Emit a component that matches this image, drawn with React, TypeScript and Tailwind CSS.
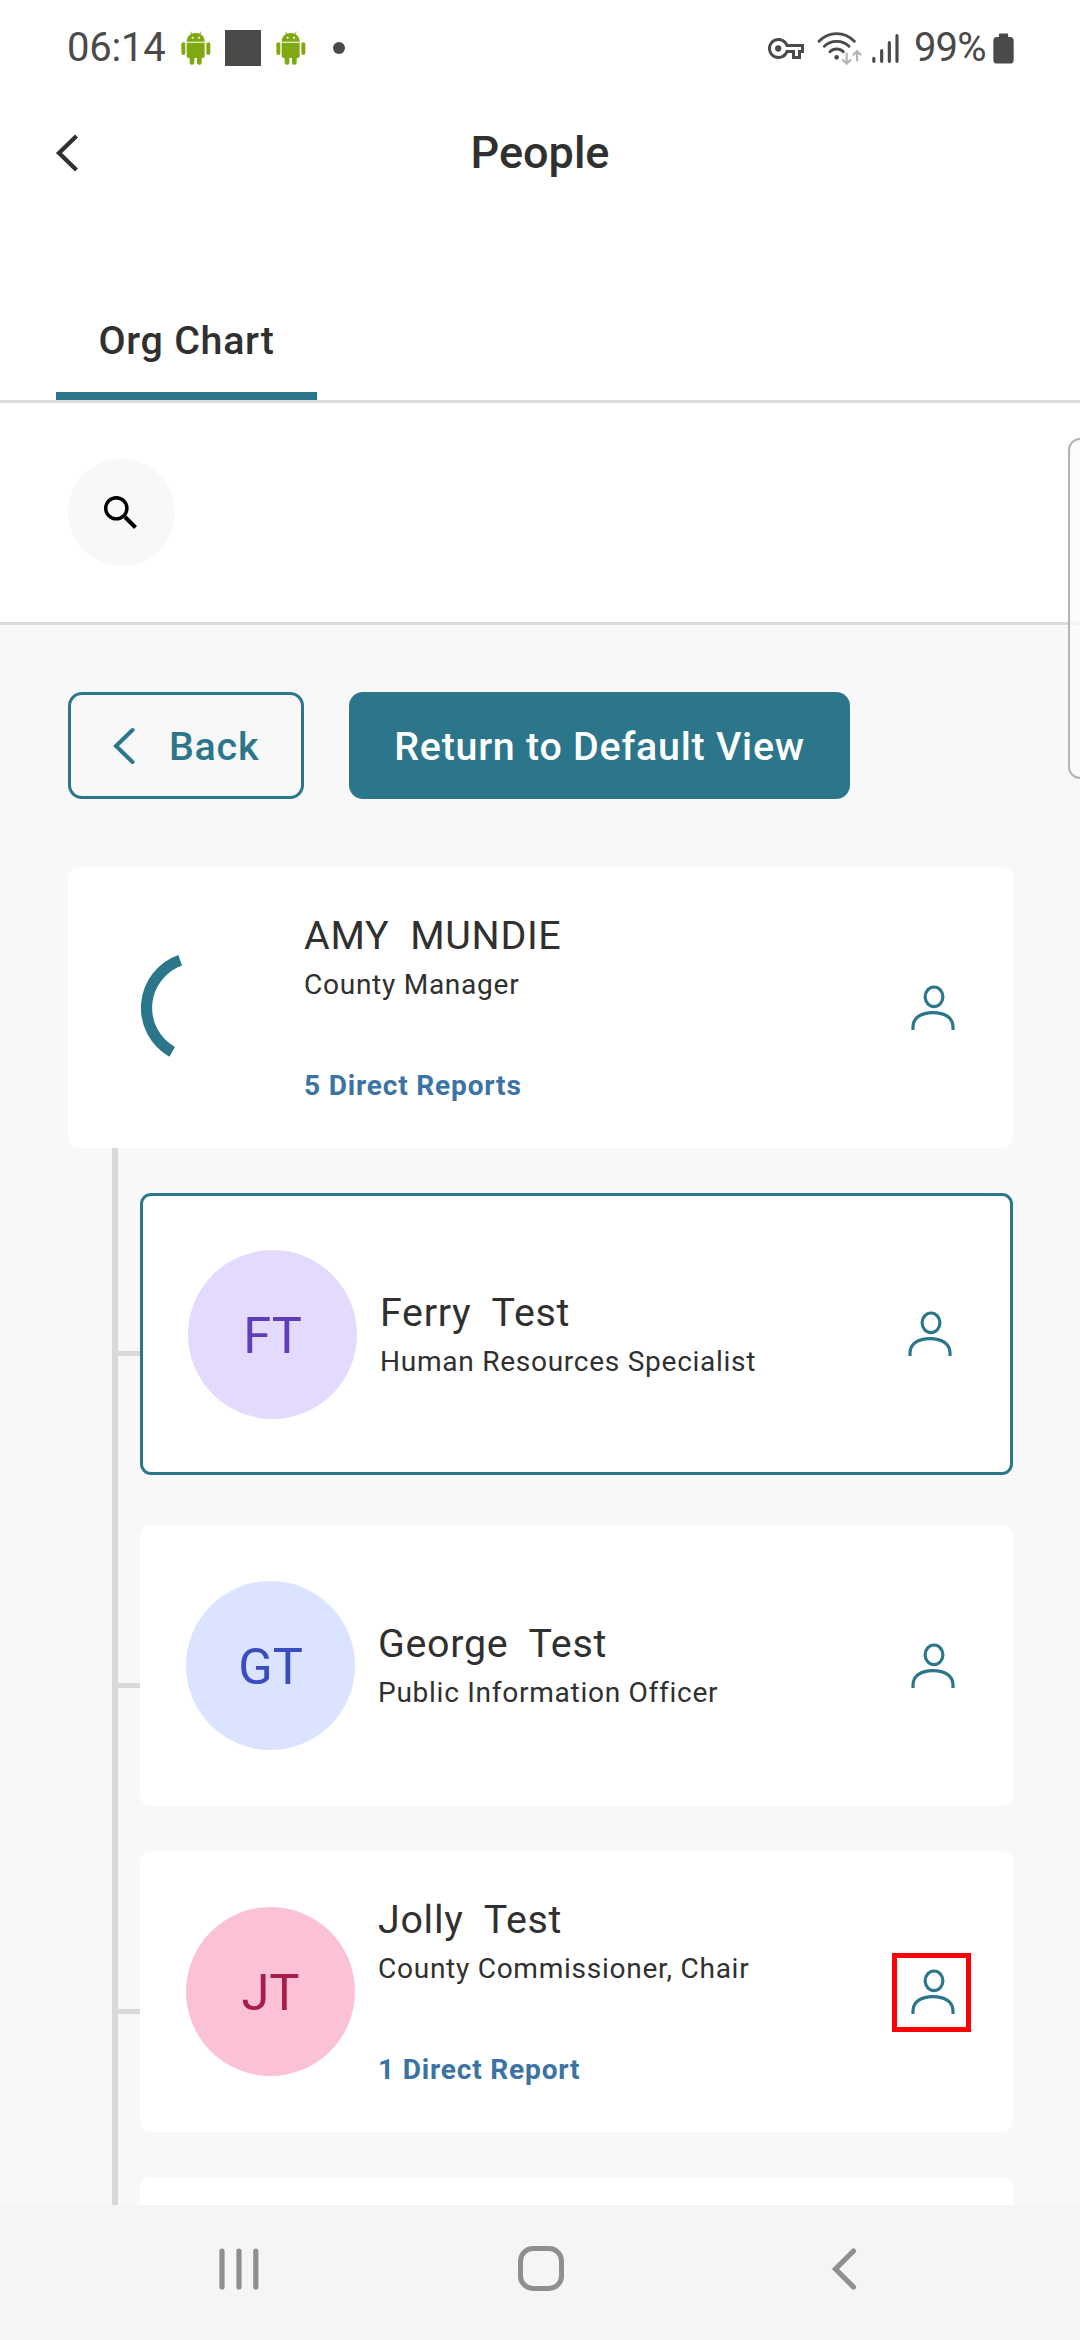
type Person = {
  name: string;
  title: string;
  reports?: string;
  initials?: string;
  avatar?: string;
  selected?: boolean;
  marked?: boolean;
};

const manager: Person = {
  name: 'AMY  MUNDIE',
  title: 'County Manager',
  reports: '5 Direct Reports',
};

const reports: Person[] = [
  {
    name: 'Ferry  Test',
    title: 'Human Resources Specialist',
    initials: 'FT',
    avatar: 'bg-[#e4dafd] text-[#5f3dbb]',
    selected: true,
  },
  {
    name: 'George  Test',
    title: 'Public Information Officer',
    initials: 'GT',
    avatar: 'bg-[#dae3ff] text-[#3a4cc0]',
  },
  {
    name: 'Jolly  Test',
    title: 'County Commissioner, Chair',
    reports: '1 Direct Report',
    initials: 'JT',
    avatar: 'bg-[#fbc2d7] text-[#a61e4d]',
    marked: true,
  },
];

function AndroidBot() {
  return (
    <svg viewBox="425 64 90 102" className="h-[34px] w-[30px]" fill="#80a911">
      <path d="M442 96c0-16 12-26 27-26s27 10 27 26z" />
      <path d="M453 66l7 11M486 66l-7 11" stroke="#80a911" strokeWidth="2.5" />
      <circle cx="460" cy="84" r="3" fill="white" />
      <circle cx="479" cy="84" r="3" fill="white" />
      <path d="M442 99h54v40q0 6-6 6h-42q-6 0-6-6z" />
      <rect x="426" y="98" width="12" height="38" rx="6" />
      <rect x="501" y="98" width="12" height="38" rx="6" />
      <rect x="451" y="132" width="14" height="33" rx="6" />
      <rect x="473" y="132" width="14" height="33" rx="6" />
    </svg>
  );
}

function VpnKey() {
  return (
    <svg viewBox="0 5 24 14" className="h-[21px] w-[36px]" fill="#4a4a4a">
      <path
        fillRule="evenodd"
        d="M22 19h-6v-4h-2.68A7 7 0 0 1 7 19c-3.86 0-7-3.14-7-7s3.14-7 7-7c2.72 0 5.17 1.58 6.32 4H24v6h-2v4zm-4-2h2v-4h2v-2H11.94l-.23-.67C11.01 8.34 9.11 7 7 7c-2.76 0-5 2.24-5 5s2.24 5 5 5c2.11 0 4.01-1.34 4.71-3.33l.23-.67H18v4z"
      />
      <circle cx="6.8" cy="12" r="2.1" />
    </svg>
  );
}

function Wifi() {
  return (
    <svg viewBox="228 60 138 105" className="h-[35px] w-[46px]" fill="none" strokeLinecap="round">
      <g stroke="#4a4a4a" strokeWidth="8.5">
        <path d="M234 91Q257 68 287 68T340 91" />
        <path d="M250 106Q265 91 287 91T324 106" />
        <path d="M267 122Q275 114 287 114T307 122" />
      </g>
      <circle cx="287" cy="139" r="7" fill="#4a4a4a" />
      <g stroke="#b4b4b4" strokeWidth="6.5">
        <path d="M317 128v28M306 147l11 11 11-11" />
        <path d="M348 148v-26M337 131l11-11 11 11" />
      </g>
    </svg>
  );
}

function Signal() {
  return (
    <svg
      viewBox="390 66 84 93"
      className="h-[31px] w-[28px]"
      stroke="#4a4a4a"
      strokeWidth="9.5"
      strokeLinecap="round"
    >
      <path d="M398.500 142v9M422 119v32M445 95v56M468 74v77" />
    </svg>
  );
}

function Battery() {
  return (
    <svg viewBox="756 68 64 94" className="h-[31px] w-[21px]" fill="#4a4a4a">
      <rect x="774" y="69" width="28" height="20" rx="3" />
      <rect x="757" y="80" width="62" height="81" rx="11" />
    </svg>
  );
}

function StatusBar() {
  return (
    <div className="flex h-24 items-center pl-[67px] pr-[66px] text-[40px] leading-[46px] text-[#4a4a4a]">
      <span className="w-[114px] tracking-[-0.2px]">06:14</span>
      <AndroidBot />
      <span className="ml-[14px] h-9 w-9 bg-[#4a4a4a]" />
      <span className="ml-[15px] flex">
        <AndroidBot />
      </span>
      <span className="ml-[27px] h-3 w-3 rounded-full bg-[#4a4a4a]" />
      <span className="ml-auto flex items-center">
        <VpnKey />
        <span className="ml-[13px] flex">
          <Wifi />
        </span>
        <span className="ml-[8px] flex">
          <Signal />
        </span>
        <span className="ml-[15px] w-[79px] tracking-[-0.9px]">99%</span>
        <Battery />
      </span>
    </div>
  );
}

function PersonIcon() {
  return (
    <svg
      viewBox="0 0 46 48"
      className="h-12 w-[46px]"
      fill="none"
      stroke="#2c768c"
      strokeWidth="3.2"
    >
      <ellipse cx="24" cy="12.800" rx="8.900" ry="9.800" />
      <path d="M3 46v-3C3 34 11 28.600 23 28.600S43 34 43 43v3" />
    </svg>
  );
}

function Spinner() {
  return (
    <svg viewBox="0 0 112 112" className="h-28 w-28" fill="none" stroke="#2c768c" strokeWidth="11.2">
      <path d="M39.200 8.300A50.500 50.500 0 0 0 31.200 99.900" />
    </svg>
  );
}

function Details({ person }: { person: Person }) {
  return (
    <div className="flex flex-col whitespace-pre tracking-[0.7px] text-[#303030]">
      <span className="text-[39.4px] leading-[46px]">{person.name}</span>
      <span className="mt-[9px] text-[28.1px] leading-[33px]">{person.title}</span>
      {person.reports && (
        <span className="mt-[68px] text-[28.1px] font-bold leading-[33px] tracking-[0.8px] text-[#3b73a5]">
          {person.reports}
        </span>
      )}
    </div>
  );
}

function ReportRow({ person }: { person: Person }) {
  return (
    <div className={person.selected ? 'flex h-[282px]' : 'flex h-[281px]'}>
      <div className="mt-[158px] h-[5px] w-[22px] bg-[#d9d9d9]" />
      <div
        className={
          person.selected
            ? 'flex flex-1 items-center rounded-[11px] border-3 border-[#2c768c] bg-white pl-[45px] pr-[57px]'
            : 'flex flex-1 items-center rounded-[11px] bg-white pl-[46px] pr-[57px]'
        }
      >
        <div
          className={`flex h-[169px] w-[169px] items-center justify-center rounded-full pt-[3px] text-[50.6px] ${person.avatar}`}
        >
          {person.initials}
        </div>
        <div className={person.selected || person.reports ? 'ml-[23px] flex-1' : 'ml-[23px] flex-1 pb-[2px]'}>
          <Details person={person} />
        </div>
        <div className="relative">
          <PersonIcon />
          {person.marked && (
            <div className="absolute -left-[18px] -top-[15px] h-[79px] w-[79px] border-5 border-[#fb0207]" />
          )}
        </div>
      </div>
    </div>
  );
}

export default function App() {
  return (
    <div className="relative flex h-[2340px] w-[1080px] flex-col overflow-hidden bg-white font-['Roboto',sans-serif]">
      <StatusBar />
      <header className="grid h-28 grid-cols-[1fr_auto_1fr] items-center pt-[1px]">
        <svg
          viewBox="0 0 24 38"
          className="ml-[55px] h-[38px] w-6"
          fill="none"
          stroke="#303030"
          strokeWidth="4.3"
        >
          <path d="M21.500 2L4 19l17.500 17" />
        </svg>
        <h1 className="text-[45px] font-medium leading-[52px] text-[#303030]">People</h1>
      </header>
      <nav className="flex h-[195px] items-end border-b-3 border-[#dadbdb] pl-14">
        <div className="flex h-[98px] w-[261px] justify-center border-b-8 border-[#2c768c] pt-[16px] text-[39.4px] font-medium leading-[46px] tracking-[0.7px] text-[#303030]">
          Org Chart
        </div>
      </nav>
      <div className="flex h-[222px] items-center border-b-3 border-[#dadbdb] pl-[68px]">
        <div className="flex h-[107px] w-[107px] items-center justify-center rounded-full bg-[#f8f8f8] pr-px">
          <svg viewBox="0 0 34 34" className="h-[34px] w-[34px]" fill="none" stroke="black">
            <circle cx="12.300" cy="12.300" r="10.600" strokeWidth="3.400" />
            <path d="M21 21L31.500 31.500" strokeWidth="4" />
          </svg>
        </div>
      </div>

      <main className="flex min-h-0 flex-1 flex-col overflow-hidden bg-[#f8f8f8] pl-[68px] pr-[67px] pt-[67px]">
        <div className="flex h-[107px] shrink-0 gap-[45px] text-[39.4px] font-medium leading-[46px] tracking-[0.75px]">
          <div className="flex w-[236px] items-center rounded-[14px] border-3 border-[#2c768c] pl-[41px] text-[#2c768c]">
            <svg
              viewBox="0 0 24 38"
              className="h-[38px] w-6"
              fill="none"
              stroke="#2c768c"
              strokeWidth="4"
              strokeLinecap="round"
            >
              <path d="M20.500 3L4 19l16.500 16" />
            </svg>
            <span className="ml-[33px] pt-[2px]">Back</span>
          </div>
          <div className="flex w-[501px] items-center justify-center rounded-[14px] bg-[#2c768c] pt-[2px] text-white">
            Return to Default View
          </div>
        </div>

        <div className="mt-[68px] flex h-[281px] shrink-0 items-center rounded-[11px] bg-white pl-[73px] pr-[57px]">
          <Spinner />
          <div className="ml-[51px] flex-1">
            <Details person={manager} />
          </div>
          <PersonIcon />
        </div>

        <div className="ml-[44px] flex shrink-0">
          <div className="w-[6px] bg-[#d9d9d9]" />
          <div className="flex flex-1 flex-col pt-[45px]">
            <ReportRow person={reports[0]} />
            <div className="mt-[50px] flex flex-col gap-[45px]">
              <ReportRow person={reports[1]} />
              <ReportRow person={reports[2]} />
              <div className="ml-[22px] h-[281px] rounded-[11px] bg-white" />
            </div>
          </div>
        </div>
      </main>

      <footer className="flex h-[135px] shrink-0 items-center bg-[#f5f5f5] pb-[8px] pl-[219px] pr-[223px]">
        <svg
          viewBox="0 0 40 42"
          className="h-[42px] w-10"
          stroke="#8f8f8f"
          strokeWidth="5.200"
          strokeLinecap="round"
        >
          <path d="M3 3v36M20 3v36M36.800 3v36" />
        </svg>
        <div className="ml-[259px] h-[45px] w-[46px] rounded-[15px] border-[5.4px] border-[#8f8f8f]" />
        <svg
          viewBox="0 0 26 42"
          className="ml-auto h-[42px] w-[26px]"
          fill="none"
          stroke="#8f8f8f"
          strokeWidth="5.200"
          strokeLinecap="round"
        >
          <path d="M22.500 3L4.500 21l18 18" />
        </svg>
      </footer>

      <div className="absolute -right-5 top-[438px] h-[341px] w-[32px] rounded-[12px] border-2 border-[#b3b3b3] bg-[#fafafa]/80" />
    </div>
  );
}
